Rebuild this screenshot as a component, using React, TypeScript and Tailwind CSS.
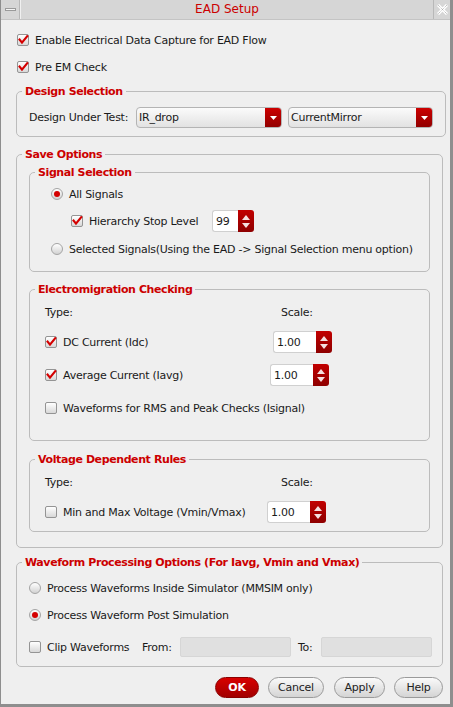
import React from "react";

const FONT = { fontFamily: '"DejaVu Sans", Verdana, sans-serif' };

function Check({ checked }: { checked?: boolean }) {
  return (
    <span className="relative inline-block h-[12px] w-[12px] shrink-0 rounded-[2px] border border-[#949494] bg-gradient-to-b from-[#ffffff] to-[#d8d8d8]">
      {checked && (
        <svg viewBox="0 0 12 12" className="absolute left-[-1px] top-[-1px] h-[12px] w-[12px]">
          <path d="M2.6 5.6 L5 8.6 L10.2 2.2" fill="none" stroke="#d40000" strokeWidth="2.2" strokeLinecap="square" />
        </svg>
      )}
    </span>
  );
}

function Radio({ checked }: { checked?: boolean }) {
  return (
    <span className="relative inline-flex h-[12px] w-[12px] shrink-0 items-center justify-center rounded-full border border-[#a4a4a4] bg-gradient-to-b from-[#ffffff] to-[#d2d2d2]">
      {checked && <span className="h-[6px] w-[6px] rounded-full bg-[#d40000]" />}
    </span>
  );
}

function CheckRow({ checked, label, className = "" }: { checked?: boolean; label: string; className?: string }) {
  return (
    <div className={"flex h-[16px] items-center gap-[6px] " + className}>
      <Check checked={checked} />
      <span className="whitespace-pre">{label}</span>
    </div>
  );
}

function RadioRow({ checked, label, className = "" }: { checked?: boolean; label: string; className?: string }) {
  return (
    <div className={"flex h-[16px] items-center gap-[6px] " + className}>
      <Radio checked={checked} />
      <span className="whitespace-pre">{label}</span>
    </div>
  );
}

function Spin({ value, inputW }: { value: string; inputW: string }) {
  return (
    <div className="flex h-[22px]">
      <div className={"flex items-center rounded-l-[3px] border border-r-0 border-[#d0d0d0] bg-white pl-[3px] " + inputW}>{value}</div>
      <div className="flex w-[16px] flex-col items-center justify-center gap-[3px] rounded-r-[3px] bg-gradient-to-b from-[#c20000] to-[#8e0000]">
        <svg width="8" height="5" viewBox="0 0 8 5"><path d="M0 5 L4 0 L8 5 Z" fill="#f4e0e0" /></svg>
        <svg width="8" height="5" viewBox="0 0 8 5"><path d="M0 0 L8 0 L4 5 Z" fill="#f4e0e0" /></svg>
      </div>
    </div>
  );
}

function Combo({ value, w }: { value: string; w: string }) {
  return (
    <div className={"flex h-[21px] overflow-hidden rounded-[4px] border border-[#b4b4b4] bg-gradient-to-b from-[#fbfbfb] to-[#e2e2e2] " + w}>
      <div className="flex flex-1 items-center pl-[2px]">{value}</div>
      <div className="flex w-[16px] items-center justify-center bg-gradient-to-b from-[#cc0000] to-[#920000]">
        <svg width="7" height="4" viewBox="0 0 7 4"><path d="M0 0 L7 0 L3.5 4 Z" fill="#ffffff" /></svg>
      </div>
    </div>
  );
}

function Group({
  title,
  className = "",
  inner = "",
  children,
}: {
  title: string;
  className?: string;
  inner?: string;
  children: React.ReactNode;
}) {
  return (
    <fieldset className={"rounded-[5px] border border-[#bcbcbc] " + className}>
      <legend className="ml-[5px] px-[3px] text-[11px] font-bold leading-[13px] tracking-[-0.4px] text-[#cc0000]">{title}</legend>
      <div className={inner}>{children}</div>
    </fieldset>
  );
}

function Btn({ label, w, primary }: { label: string; w: string; primary?: boolean }) {
  return (
    <div
      className={
        "flex h-[21px] items-center justify-center rounded-full border " +
        w +
        (primary
          ? " border-[#8a0000] bg-gradient-to-b from-[#d80000] to-[#a20000] font-bold text-white"
          : " border-[#9a9a9a] bg-gradient-to-b from-[#fafafa] to-[#d4d4d4] text-[#222]")
      }
    >
      {label}
    </div>
  );
}

export default function App() {
  return (
    <div style={FONT} className="h-[707px] w-[453px] overflow-hidden border-b-[3px] border-l-[1px] border-r-[3px] border-[#8e8e8e] bg-[#efefef] text-[11px] leading-[13px] tracking-[-0.25px] text-[#1a1a1a]">
      {/* title bar */}
      <div className="flex h-[20px] border-b border-[#c4c4c4] bg-[#e2e2e2] tracking-normal">
        <div className="flex w-[19px] items-center justify-center border-r border-[#b8b8b8] bg-[#d6d6d6]">
          <span className="h-[3px] w-[11px] border border-[#9a9a9a] bg-[#f4f4f4]" />
        </div>
        <div className="flex flex-1 items-center justify-center border-l border-[#f0f0f0] bg-[#d6d6d6] text-[12px] text-[#cc0000]">EAD Setup</div>
        <div className="flex w-[17px] items-center justify-center border-l border-[#b8b8b8] bg-[#d6d6d6]">
          <svg width="11" height="11" viewBox="0 0 11 11">
            <path d="M1 1 L10 10 M10 1 L1 10" stroke="#ffffff" strokeWidth="3" />
            <path d="M1 1 L10 10 M10 1 L1 10" stroke="#a8a8a8" strokeWidth="1" strokeDasharray="1 1" />
          </svg>
        </div>
      </div>

      <div className="pl-[15px] pr-[7px]">
        <CheckRow checked label="Enable Electrical Data Capture for EAD Flow" className="ml-[1px] mt-[12px]" />
        <CheckRow checked label="Pre EM Check" className="ml-[1px] mt-[11px]" />

        <Group title="Design Selection" className="mt-[10px]" inner="px-[12px] pb-[8px]">
          <div className="mt-[9px] flex items-center">
            <span className="w-[107px]">Design Under Test:</span>
            <Combo value="IR_drop" w="w-[146px]" />
            <div className="w-[6px]" />
            <Combo value="CurrentMirror" w="w-[145px]" />
          </div>
        </Group>

        <Group title="Save Options" className="mt-[11px]" inner="px-[12px] pb-[15px]">
          <Group title="Signal Selection" className="mt-[5px]" inner="pb-[14px] pl-[21px]">
            <RadioRow checked label="All Signals" className="mt-[7px]" />
            <div className="ml-[20px] mt-[8px] flex h-[22px] items-center">
              <div className="flex w-[141px] items-center gap-[6px]">
                <Check checked />
                <span>Hierarchy Stop Level</span>
              </div>
              <Spin value="99" inputW="w-[26px]" />
            </div>
            <RadioRow label="Selected Signals(Using the EAD -> Signal Selection menu option)" className="mt-[9px]" />
          </Group>

          <Group title="Electromigration Checking" className="mt-[11px]" inner="pb-[24px] pl-[15px]">
            <div className="mt-[8px] flex h-[16px] items-center">
              <span className="w-[236px]">Type:</span>
              <span>Scale:</span>
            </div>
            <div className="mt-[11px] flex h-[22px] items-center">
              <div className="flex w-[228px] items-center gap-[6px]">
                <Check checked />
                <span>DC Current (Idc)</span>
              </div>
              <Spin value="1.00" inputW="w-[43px]" />
            </div>
            <div className="mt-[11px] flex h-[22px] items-center">
              <div className="flex w-[225px] items-center gap-[6px]">
                <Check checked />
                <span>Average Current (Iavg)</span>
              </div>
              <Spin value="1.00" inputW="w-[43px]" />
            </div>
            <CheckRow label="Waveforms for RMS and Peak Checks (Isignal)" className="mt-[14px]" />
          </Group>

          <Group title="Voltage Dependent Rules" className="mt-[12px]" inner="pb-[8px] pl-[15px]">
            <div className="mt-[8px] flex h-[16px] items-center">
              <span className="w-[236px]">Type:</span>
              <span>Scale:</span>
            </div>
            <div className="mt-[11px] flex h-[22px] items-center">
              <div className="flex w-[222px] items-center gap-[6px]">
                <Check />
                <span>Min and Max Voltage (Vmin/Vmax)</span>
              </div>
              <Spin value="1.00" inputW="w-[43px]" />
            </div>
          </Group>
        </Group>

        <Group title="Waveform Processing Options (For Iavg, Vmin and Vmax)" className="mt-[8px]" inner="pb-[9px] pl-[12px] pr-[10px]">
          <RadioRow label="Process Waveforms Inside Simulator (MMSIM only)" className="mt-[11px]" />
          <RadioRow checked label="Process Waveform Post Simulation" className="mt-[11px]" />
          <div className="mt-[14px] flex h-[20px] items-center">
            <div className="flex w-[113px] items-center gap-[6px]">
              <Check />
              <span>Clip Waveforms</span>
            </div>
            <span className="w-[38px]">From:</span>
            <div className="h-[20px] w-[111px] rounded-[2px] border border-[#d6d6d6] bg-[#e0e0e0]" />
            <span className="ml-[7px] w-[23px]">To:</span>
            <div className="h-[20px] w-[111px] rounded-[2px] border border-[#d6d6d6] bg-[#e0e0e0]" />
          </div>
        </Group>

        <div className="mt-[10px] flex justify-end">
          <Btn label="OK" w="w-[44px]" primary />
          <div className="w-[9px]" />
          <Btn label="Cancel" w="w-[56px]" />
          <div className="w-[10px]" />
          <Btn label="Apply" w="w-[51px]" />
          <div className="w-[9px]" />
          <Btn label="Help" w="w-[49px]" />
        </div>
      </div>
    </div>
  );
}
